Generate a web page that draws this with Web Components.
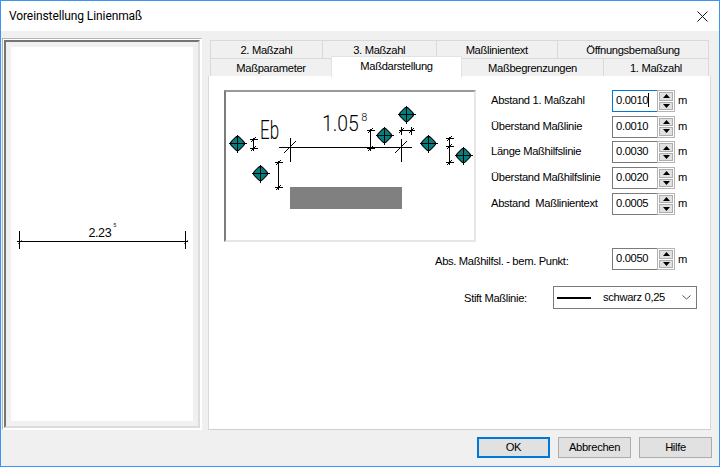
<!DOCTYPE html>
<html lang="de">
<head>
<meta charset="utf-8">
<title>Voreinstellung Linienmaß</title>
<style>
  html, body { margin: 0; padding: 0; background: #f0f0f0; }
  body { font: 11.2px "Liberation Sans", Arial, sans-serif; letter-spacing: -.33px; color: #000; }
</style>
</head>
<body>
<dialog-window caption="Voreinstellung Linienmaß">
  <preview-pane slot="left"></preview-pane>
  <tab-pages slot="right">
    <tab-row slot="top" cols="112px 113.5px 121.5px 151px">
      <tab-item>2. Maßzahl</tab-item>
      <tab-item>3. Maßzahl</tab-item>
      <tab-item>Maßlinientext</tab-item>
      <tab-item>Öffnungsbemaßung</tab-item>
    </tab-row>
    <tab-row slot="top" cols="121px 130px 142px 105px">
      <tab-item>Maßparameter</tab-item>
      <tab-item active>Maßdarstellung</tab-item>
      <tab-item>Maßbegrenzungen</tab-item>
      <tab-item>1. Maßzahl</tab-item>
    </tab-row>
    <dim-page>
      <dim-diagram slot="picture"></dim-diagram>
      <spin-field slot="fields" label="Abstand 1. Maßzahl" value="0.0010" focused></spin-field>
      <spin-field slot="fields" label="Überstand Maßlinie" value="0.0010"></spin-field>
      <spin-field slot="fields" label="Länge Maßhilfslinie" value="0.0030"></spin-field>
      <spin-field slot="fields" label="Überstand Maßhilfslinie" value="0.0020"></spin-field>
      <spin-field slot="fields" label="Abstand  Maßlinientext" value="0.0005"></spin-field>
      <spin-field slot="lower" class="wide" label="Abs. Maßhilfsl. - bem. Punkt:" value="0.0050"></spin-field>
      <pen-select slot="lower" label="Stift Maßlinie:" value="schwarz 0,25"></pen-select>
    </dim-page>
  </tab-pages>
  <push-button slot="buttons" default>OK</push-button>
  <push-button slot="buttons">Abbrechen</push-button>
  <push-button slot="buttons">Hilfe</push-button>
</dialog-window>

<script>
// Dialograhmen mit Titelleiste und Schaltflaechen
class DialogWindow extends HTMLElement {
  connectedCallback() {
    this.attachShadow({ mode: "open" });
    this.shadowRoot.innerHTML = `
      <style>
        :host { display: flex; flex-direction: column; box-sizing: border-box; width: 720px; height: 467px;
                border: 1px solid #3a94f2; background: #f0f0f0; overflow: hidden; }
        .title { display: flex; align-items: center; justify-content: space-between; height: 30px; flex: none;
                 background: #fff; padding: 0 11px 0 8px; font: 12px Roboto, sans-serif; letter-spacing: -.1px; }
        .title svg { display: block; }
        .main { display: flex; gap: 6px; padding: 7px 0 0 1px; flex: none; height: 392px; }
        .buttons { display: flex; justify-content: flex-end; gap: 8px; padding: 7px 7px 0 0; }
      </style>
      <div class="title">
        <span>${this.getAttribute("caption")}</span>
        <svg width="11" height="11" viewBox="0 0 11 11"><path d="M.5.5l10 10M10.5.5l-10 10" stroke="#111" fill="none"/></svg>
      </div>
      <div class="main"><slot name="left"></slot><slot name="right"></slot></div>
      <div class="buttons"><slot name="buttons"></slot></div>`;
  }
}

// Vorschau links
class PreviewPane extends HTMLElement {
  connectedCallback() {
    this.attachShadow({ mode: "open" });
    this.shadowRoot.innerHTML = `
      <style>
        :host { display: block; box-sizing: border-box; width: 200px; height: 392px; padding: 1px; background: #fff;
                border: 1px solid; border-color: #b4b4b4 #fff #fff #b4b4b4; }
        .inner { box-sizing: border-box; height: 100%; padding: 5px; background: #f0f0f0;
                 border: 2px solid; border-color: #747474 #dcdcdc #dcdcdc #747474; }
        svg { display: block; width: 100%; height: 100%; background: #fff; }
        text { font: 12.5px "Liberation Sans", sans-serif; letter-spacing: -.4px; }
      </style>
      <div class="inner">
        <svg viewBox="11 47 182 373">
          <g stroke="#000" fill="none" shape-rendering="crispEdges">
            <path d="M17 240.5h171M19.5 230v18M185.5 230v18"/>
            <path d="M17 243l4-4M183 243l4-4" stroke-width=".6"/>
          </g>
          <text x="88.5" y="236">2.23</text>
          <text x="113.5" y="226" style="font-size:5px" font-weight="700">5</text>
        </svg>
      </div>`;
  }
}

// Registerkarten
class TabPages extends HTMLElement {
  connectedCallback() {
    this.attachShadow({ mode: "open" });
    this.shadowRoot.innerHTML = `
      <style>
        :host { display: flex; flex-direction: column; width: 503px; height: 392px; }
        .tabs { margin: 2px 0 0 2px; position: relative; z-index: 1; }
        .body { flex: 1; box-sizing: border-box; background: #fff; border: 1px solid #d9d9d9; border-bottom-color: #cfcfcf; border-top: 0; }
      </style>
      <div class="tabs"><slot name="top"></slot></div>
      <div class="body"><slot></slot></div>`;
  }
}

class TabRow extends HTMLElement {
  connectedCallback() {
    this.attachShadow({ mode: "open" });
    this.shadowRoot.innerHTML = `
      <style>
        :host { display: grid; grid-template-columns: ${this.getAttribute("cols")}; height: 18px; }
      </style>
      <slot></slot>`;
  }
}

class TabItem extends HTMLElement {
  connectedCallback() {
    this.attachShadow({ mode: "open" });
    this.shadowRoot.innerHTML = `
      <style>
        :host { display: flex; align-items: center; justify-content: center; box-sizing: border-box; height: 18px;
                background: #f0f0f0; border: 1px solid #d9d9d9; border-bottom: 0; margin-right: -1px;
                white-space: nowrap; padding-top: 1px; }
        :host([active]) { position: relative; z-index: 2; background: #fff; height: 21px; margin-top: -2px;
                          padding: 0 0 3px; border-color: #e3e3e3; }
      </style>
      <slot></slot>`;
  }
}

// Inhalt der Karte Maßdarstellung
class DimPage extends HTMLElement {
  connectedCallback() {
    this.attachShadow({ mode: "open" });
    this.shadowRoot.innerHTML = `
      <style>
        :host { display: block; padding: 14px 0 0 15px; }
        .top { display: flex; gap: 15px; }
        .fields { display: grid; grid-auto-rows: 22px; row-gap: 3.7px; }
        .lower { display: grid; row-gap: 16px; margin-top: 6px; }
      </style>
      <div class="top">
        <slot name="picture"></slot>
        <div class="fields"><slot name="fields"></slot></div>
      </div>
      <div class="lower"><slot name="lower"></slot></div>`;
  }
}

// Zahlenfeld mit Auf/Ab
class SpinField extends HTMLElement {
  connectedCallback() {
    this.attachShadow({ mode: "open" });
    const caret = this.hasAttribute("focused") ? '<i class="caret"></i>' : "";
    this.shadowRoot.innerHTML = `
      <style>
        :host { display: grid; grid-template-columns: 121px 45px 18px auto; align-items: center; height: 22px; }
        :host(.wide) { grid-template-columns: 177px 45px 18px auto; margin-left: 211px; }
        .label { white-space: pre; padding-bottom: 2px; }
        :host(.wide) .label { padding: 3px 0 0; }
        .input { display: flex; align-items: center; box-sizing: border-box; height: 22px; padding: 0 0 2px 3px;
                 border: 1px solid #7a7a7a; border-right: 0; background: #fff; }
        :host([focused]) .input { border-color: #0078d7; }
        .caret { display: block; width: 1px; height: 14px; background: #000; }
        .spin { display: grid; grid-template-rows: 1fr 1fr; gap: 1px; box-sizing: border-box; height: 22px;
                padding: 1px; border: 1px solid #b4b4b4; background: #fff; }
        .spin b { display: flex; align-items: center; justify-content: center; background: #e1e1e1; border: 1px solid #adadad; }
        .spin svg { display: block; }
        .unit { padding: 0 0 2px 3px; }
        :host(.wide) .unit { padding-bottom: 0; }
      </style>
      <span class="label">${this.getAttribute("label")}</span>
      <div class="input"><span>${this.getAttribute("value")}</span>${caret}</div>
      <div class="spin">
        <b><svg width="7" height="4"><path d="M3.5 0L7 4H0z"/></svg></b>
        <b><svg width="7" height="4"><path d="M0 0h7L3.5 4z"/></svg></b>
      </div>
      <span class="unit">m</span>`;
  }
}

class PenSelect extends HTMLElement {
  connectedCallback() {
    this.attachShadow({ mode: "open" });
    this.shadowRoot.innerHTML = `
      <style>
        :host { display: grid; grid-template-columns: 89px 144px; align-items: center; margin-left: 240px; height: 23px; }
        .box { display: flex; align-items: center; box-sizing: border-box; height: 23px; padding: 0 4px 0 3px;
               background: #fff; border: 1px solid #7a7a7a; }
        .pen { display: block; width: 34px; height: 2px; background: #000; flex: none; }
        .val { flex: 1; text-align: center; padding: 0 5px 2px 0; }
        svg { display: block; flex: none; margin-right: 1px; }
      </style>
      <span class="label">${this.getAttribute("label")}</span>
      <div class="box">
        <i class="pen"></i>
        <span class="val">${this.getAttribute("value")}</span>
        <svg width="9" height="5"><path d="M.5.5l4 3.5 4-3.5" fill="none" stroke="#555"/></svg>
      </div>`;
  }
}

class PushButton extends HTMLElement {
  connectedCallback() {
    this.attachShadow({ mode: "open" });
    this.shadowRoot.innerHTML = `
      <style>
        :host { display: flex; align-items: center; justify-content: center; box-sizing: border-box;
                width: 73px; height: 21px; padding-bottom: 2px; background: #e1e1e1; border: 1px solid #adadad; }
        :host([default]) { border: 2px solid #0078d7; }
      </style>
      <slot></slot>`;
  }
}

// Kleine Bemaßungszeichen und Punkte der Skizze
function marker(x, y) {
  return `<rect x="${x - 5.8}" y="${y - 5.8}" width="11.6" height="11.6" rx="3" fill="#008080" stroke="#000"
            transform="rotate(45 ${x} ${y})"/>
          <path d="M${x - 9} ${y}h18M${x} ${y - 9}v18" stroke="#000" fill="none" shape-rendering="crispEdges"/>`;
}
function dimV(x, ys) {
  let d = `M${x} ${ys[0] - 2}V${ys[ys.length - 1] + 2}`;
  let s = "";
  for (const y of ys) {
    d += `M${x - 4} ${y}h8`;
    s += `M${x - 2.5} ${y + 2.5}l5 -5`;
  }
  return `<path d="${d}" stroke="#000" fill="none" shape-rendering="crispEdges"/>
          <path d="${s}" stroke="#000" fill="none"/>`;
}
function dimH(y, xs) {
  let d = `M${xs[0] - 3} ${y}H${xs[xs.length - 1] + 3}`;
  let s = "";
  for (const x of xs) {
    d += `M${x} ${y - 4}v8`;
    s += `M${x - 2.5} ${y + 2.5}l5 -5`;
  }
  return `<path d="${d}" stroke="#000" fill="none" shape-rendering="crispEdges"/>
          <path d="${s}" stroke="#000" fill="none"/>`;
}

class DimDiagram extends HTMLElement {
  connectedCallback() {
    this.attachShadow({ mode: "open" });
    const points = [[237.5, 143.5], [260.5, 173.5], [384.5, 135.5], [406.5, 114.5], [428.5, 143.5], [463.5, 155.5]];
    this.shadowRoot.innerHTML = `
      <style>
        :host { display: block; box-sizing: border-box; width: 252px; height: 152px; background: #fff;
                border: 2px solid; border-color: #9a9a9a #e6e6e6 #e6e6e6 #7c7c7c; }
        svg { display: block; width: 248px; height: 148px; }
        text { font-family: Roboto, "Liberation Sans", sans-serif; font-weight: 300; fill: #000; letter-spacing: 0; }
      </style>
      <svg viewBox="226 92 248 148">
        <rect x="290" y="187" width="112" height="22" fill="#808080"/>
        <path d="M279 147.5h133M290.5 138v24M401.5 139v23" stroke="#000" fill="none" shape-rendering="crispEdges"/>
        <path d="M284 153l12-12M395 153l12-12" stroke="#000" fill="none"/>
        ${dimV(253.5, [139.5, 148.5])}
        ${dimV(278.5, [162.5, 187.5])}
        ${dimV(370.5, [130.5, 148.5])}
        ${dimV(449.5, [138.5, 146.5, 162.5])}
        ${dimH(130.5, [401.5, 411.5])}
        ${points.map(p => marker(p[0], p[1])).join("")}
        <text transform="translate(260 139) scale(.68 1)" style="font-size:25px">Eb</text>
        <text transform="translate(322 131) scale(.88 1)" style="font-size:22px">1.05</text>
        <text x="361.2" y="121" style="font-size:11px">8</text>
      </svg>`;
  }
}

customElements.define("dialog-window", DialogWindow);
customElements.define("preview-pane", PreviewPane);
customElements.define("tab-pages", TabPages);
customElements.define("tab-row", TabRow);
customElements.define("tab-item", TabItem);
customElements.define("dim-page", DimPage);
customElements.define("spin-field", SpinField);
customElements.define("pen-select", PenSelect);
customElements.define("push-button", PushButton);
customElements.define("dim-diagram", DimDiagram);
</script>
</body>
</html>
